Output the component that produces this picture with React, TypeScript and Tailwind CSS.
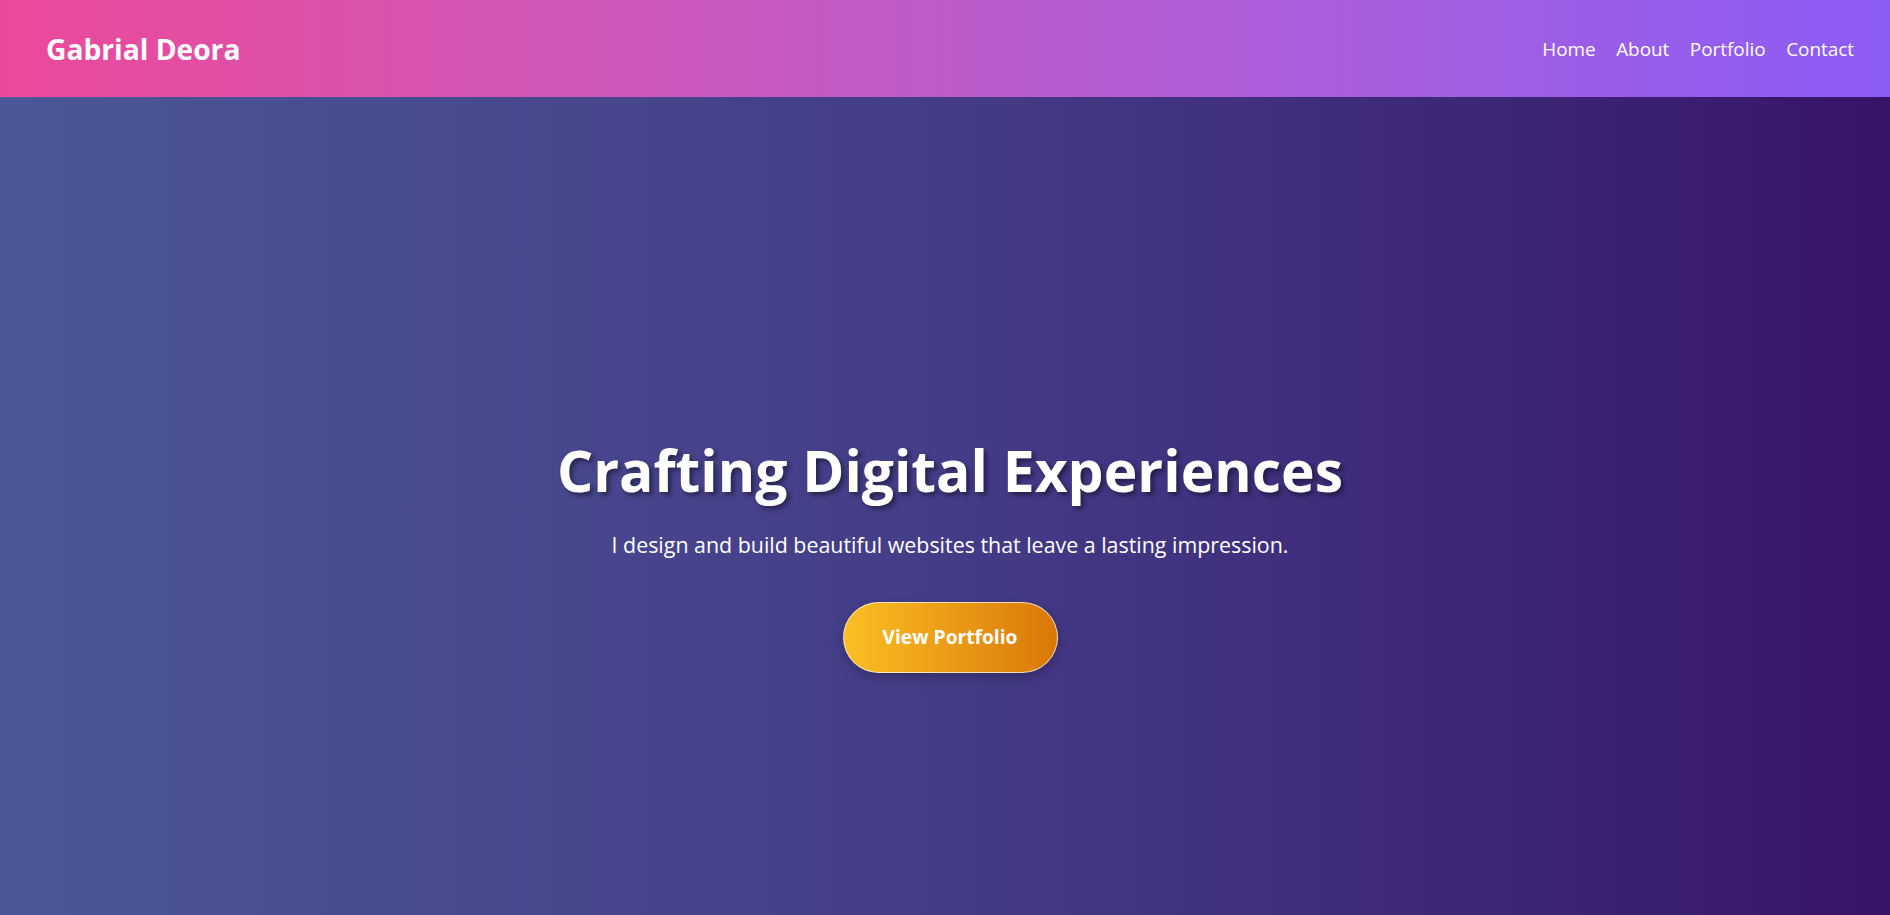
import React from "react";

export default function App() {
  return (
    <div className="w-full font-['Open_Sans',sans-serif] text-white">
      <header className="h-[97px] flex items-center justify-between pt-[2px] px-[46px] pr-[36px] bg-gradient-to-r from-[#ec4899] to-[#8b5cf6]">
        <div className="text-[28.2px] font-bold leading-none">Gabrial Deora</div>
        <nav className="flex items-center gap-[20.5px] text-[18.9px] leading-none">
          <a href="#">Home</a>
          <a href="#">About</a>
          <a href="#">Portfolio</a>
          <a href="#">Contact</a>
        </nav>
      </header>
      <section className="h-screen flex flex-col items-center justify-center pl-[10px] bg-gradient-to-r from-[#4b5797] via-[#443c88] to-[#37146a] text-center">
        <h1 className="text-[57px] font-bold leading-[1.2] [text-shadow:3px_3px_5px_rgba(0,0,0,0.45)]">
          Crafting Digital Experiences
        </h1>
        <p className="mt-[25px] text-[21.4px] leading-[1.5]">
          I design and build beautiful websites that leave a lasting impression.
        </p>
        <button className="mt-[41px] w-[215px] h-[71px] rounded-full border border-white/70 bg-gradient-to-r from-[#fbbf24] to-[#d97706] text-[19.2px] font-bold shadow-[0_4px_12px_rgba(0,0,0,0.25)]">
          View Portfolio
        </button>
      </section>
    </div>
  );
}
